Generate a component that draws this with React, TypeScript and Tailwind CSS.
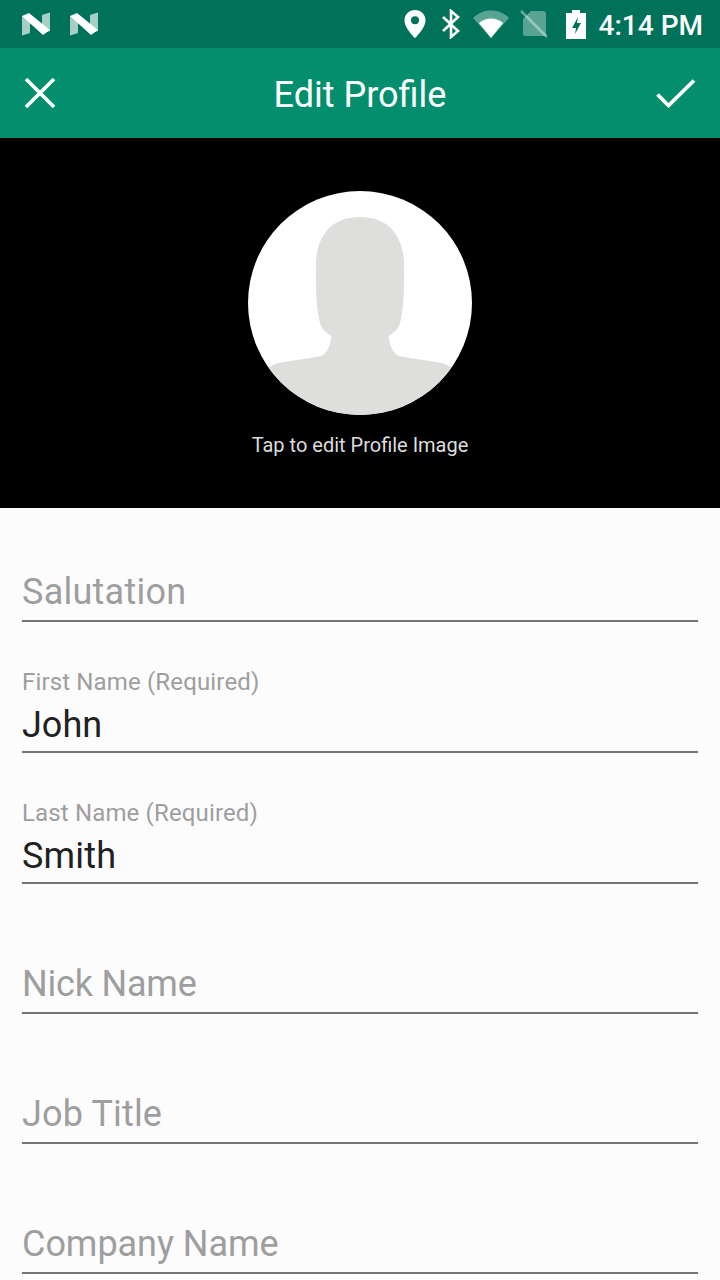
export default function App() {
  return (
    <div className="relative h-[1280px] w-[720px] overflow-hidden bg-[#fcfcfc] font-['Roboto',sans-serif]">
      <div className="flex h-[48px] items-center bg-[#00725a] pl-[22px] pr-[17px] text-white">
        <NIcon />
        <div className="w-[20px]" />
        <NIcon />
        <div className="flex-1" />
        <svg width="22" height="28" viewBox="0 0 22 28" className="mr-[15px]">
          <path fillRule="evenodd" fill="#fff" d="M11 0C5 0 .5 4.600.5 10.400.5 18 11 28 11 28s10.500-10 10.500-17.600C21.500 4.600 17 0 11 0Zm0 14.200a4 4 0 1 1 0-8 4 4 0 0 1 0 8Z" />
        </svg>
        <svg width="20" height="30" viewBox="0 0 20 30" className="mr-[12px]">
          <path fill="none" stroke="#fff" strokeWidth="2.600" d="M2 8l15 14-7 6V2l7 6L2 22" />
        </svg>
        <svg width="36" height="28" viewBox="0 0 36 28" className="mr-[11px]">
          <path fill="#fff" fillOpacity=".35" d="M0 8C5 3 11 .5 18 .5S31 3 36 8L18 28Z" />
          <path fill="#fff" d="M6 13c3.500-3 7.500-4.500 12-4.500S26.500 10 30 13L18 28Z" />
        </svg>
        <svg width="28" height="28" viewBox="0 0 28 28" className="mr-[18px]">
          <path fill="#fff" fillOpacity=".35" d="M11 1h12c2 0 3 1 3 3v22H5a2 2 0 0 1-2-2V9Z" />
          <path stroke="#fff" strokeOpacity=".4" strokeWidth="2.500" d="M1 1l26 26" />
        </svg>
        <svg width="20" height="29" viewBox="0 0 20 29" className="mr-[13px]">
          <path fill="#fff" fillRule="evenodd" d="M6 0h8v3h6v26H0V3h6Zm6 7-6 11h4l-1 6 6-11h-4Z" />
        </svg>
        <span className="mt-[3px] text-[28px] font-medium leading-none">4:14 PM</span>
      </div>

      <div className="flex h-[90px] items-center justify-between bg-[#038f6e] px-[24px] text-white">
        <div className="w-[40px]">
          <svg width="32" height="32" viewBox="0 0 32 32">
            <path stroke="#fff" strokeWidth="3.600" d="M2 2l28 28M30 2L2 30" />
          </svg>
        </div>
        <span className="mt-[4px] text-[36px] leading-none">Edit Profile</span>
        <svg width="40" height="30" viewBox="0 0 40 30">
          <path fill="none" stroke="#fff" strokeWidth="3.800" d="M1.500 16.500 12.500 27.500 38 2.500" />
        </svg>
      </div>

      <div className="flex h-[370px] flex-col items-center bg-black pt-[53px]">
        <svg width="224" height="224" viewBox="0 0 224 224">
          <defs>
            <clipPath id="c">
              <circle cx="112" cy="112" r="112" />
            </clipPath>
          </defs>
          <circle cx="112" cy="112" r="112" fill="#fff" />
          <path
            clipPath="url(#c)"
            fill="#dededd"
            d="M112 26C84 26 69 44 68 72C67.500 90 68 112 71 128C72.500 137 76 140 83 145C83 153 80 161 74 165L30 172C26 173 22 175 18 179V224H206V179C202 175 198 173 194 172L150 165C144 161 141 153 141 145C148 140 151.500 137 153 128C156 112 156.500 90 156 72C155 44 140 26 112 26Z"
          />
        </svg>
        <span className="mt-[18px] text-[20px] leading-[24px] text-[#dcdcdc]">Tap to edit Profile Image</span>
      </div>

      <div className="px-[22px]">
        <Field h="h-[114px]" placeholder="Salutation" track="tracking-[0.25px]" />
        <Field h="h-[131px]" label="First Name (Required)" value="John" />
        <Field h="h-[131px]" label="Last Name (Required)" value="Smith" track="tracking-[0.2px]" />
        <Field h="h-[130px]" placeholder="Nick Name" track="tracking-[-0.2px]" />
        <Field h="h-[130px]" placeholder="Job Title" track="tracking-[0.15px]" />
        <Field h="h-[130px]" placeholder="Company Name" track="tracking-[-0.05px]" />
      </div>
    </div>
  );
}

function NIcon() {
  return (
    <svg width="28" height="24" viewBox="0 0 28 24">
      <path fill="#fff" fillOpacity=".65" d="M0 4 8 6V21L0 23.500ZM20 3 28 .5V19L20 21Z" />
      <path fill="#fff" d="M0 4 7 1 28 18 21 23Z" />
    </svg>
  );
}

function Field({ h, label, value, placeholder, track = "" }: { h: string; label?: string; value?: string; placeholder?: string; track?: string }) {
  return (
    <div className={`${h} flex flex-col justify-end`}>
      {label && <div className="mb-[8px] text-[24px] leading-[28px] tracking-[0.15px] text-[#9e9e9e]">{label}</div>}
      {value && <div className={`${track} mb-[5px] text-[36px] leading-[42px] text-[#212121]`}>{value}</div>}
      {placeholder && <div className={`${track} mb-[7px] text-[36px] leading-[42px] text-[#9e9e9e]`}>{placeholder}</div>}
      <div className="h-[2px] bg-[#757575]" />
    </div>
  );
}
